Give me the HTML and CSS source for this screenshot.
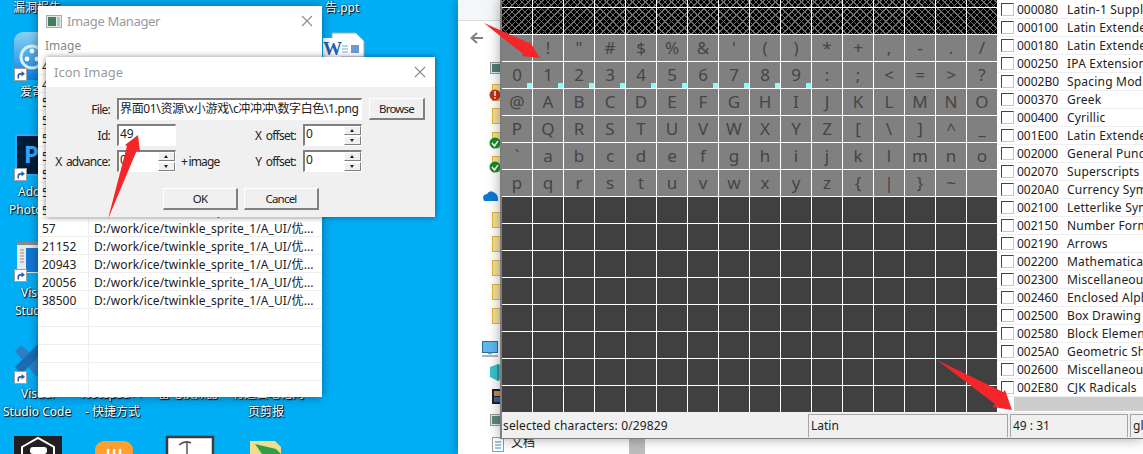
FILE: index.html
```html
<!DOCTYPE html>
<html lang="zh">
<head>
<meta charset="utf-8">
<title>Image Manager</title>
<link rel="stylesheet" href="styles.css">
</head>
<body>
<div class="desktop">
  <svg class="canvas-art" width="1143" height="454" viewBox="0 0 1143 454">
    <defs>
      <linearGradient id="iq" x1="0" y1="0" x2="0" y2="1"><stop offset="0" stop-color="#8ad2f5"/><stop offset="1" stop-color="#0a7fe0"/></linearGradient>
      <symbol id="sc" viewBox="0 0 13 13">
        <rect x=".5" y=".5" width="12" height="12" fill="#fff" stroke="#a0a0a0"/>
        <path d="M3.5 10.5V7.5Q3.5 5 6.5 5H7.5V3L11 5.8 7.5 8.5V6.8H6.5Q5 6.8 5 8.5V10.5Z" fill="#2f5ea8"/>
      </symbol>
    </defs>
    <rect x="14" y="32" width="40" height="48" rx="9" fill="url(#iq)"/>
    <circle cx="32" cy="57" r="11" fill="none" stroke="#d6effb" stroke-width="3"/>
    <circle cx="32" cy="51" r="2.4" fill="#fff"/><circle cx="27" cy="59" r="2.4" fill="#fff"/><circle cx="37" cy="59" r="2.4" fill="#fff"/>
    <use href="#sc" x="14" y="68" width="13" height="13"/>

    <rect x="16" y="135" width="30" height="40" fill="#001e36" stroke="#31a8ff" stroke-width="2"/>
    <text x="24" y="163" class="art-p">P</text>
    <use href="#sc" x="14" y="168" width="13" height="13"/>

    <rect x="17" y="242" width="30" height="31" fill="#e8e8e8"/>
    <rect x="17" y="242" width="30" height="3" fill="#8a8a8a"/>
    <rect x="26" y="248" width="20" height="24" fill="#1478d4"/>
    <path d="M20 250h4M20 253h4M20 256h4M20 259h4M20 262h4" stroke="#8f8f8f"/>
    <use href="#sc" x="14" y="269" width="13" height="13"/>

    <path d="M15 351L21 345 40 362V376H36Z" fill="#2a7fc6"/>
    <path d="M15 367L21 374 42 354V344H38Z" fill="#1b6db3"/>
    <use href="#sc" x="14" y="371" width="13" height="13"/>

    <path d="M332 33H356L364 41V57H332Z" fill="#fff" stroke="#9aa8b8"/>
    <rect x="323" y="38" width="18" height="19" fill="#fff"/>
    <text x="323" y="55" class="art-w">W</text>
    <path d="M342 46h6M342 49h6M342 52h6" stroke="#7fa6d6"/>
    <rect x="351" y="45" width="8" height="8" fill="#6f9ad0"/>

    <rect x="14" y="436" width="48" height="18" fill="#231f20"/>
    <path d="M22 454V447L38 438 54 447V454" fill="none" stroke="#fff" stroke-width="2"/>
    <rect x="30" y="447" width="17" height="7" rx="3" fill="#fff"/>
    <rect x="95" y="441" width="38" height="20" rx="9" fill="#ff9f2e"/>
    <path d="M108 449v5M114 449v5M120 449v5" stroke="#fff" stroke-width="2.5"/>
    <rect x="167" y="437" width="46" height="20" fill="#fff" stroke="#3c3c3c" stroke-width="2.5"/>
    <path d="M179 445Q185 440 191 443M187 442V454" fill="none" stroke="#555" stroke-width="1.5"/>
    <path d="M250 441H275L281 447V454H250Z" fill="#f1dd8a"/>
    <path d="M255 444L276 449 281 454H262Z" fill="#2f9e44"/>
  </svg>

  <span class="label lbl-a">漏洞报告</span>
  <span class="label lbl-b">告.ppt</span>
  <span class="label lbl-c">爱奇</span>
  <span class="label lbl-d">Ado</span>
  <span class="label lbl-e">Photo</span>
  <span class="label lbl-f">Vis</span>
  <span class="label lbl-g">Stud</span>
  <span class="label lbl-h">Visual</span>
  <span class="label lbl-i">Studio Code</span>
  <span class="label lbl-j">Notepad++</span>
  <span class="label lbl-k">- 快捷方式</span>
  <span class="label lbl-l">雷电模拟器</span>
  <span class="label lbl-m">有道云笔记网</span>
  <span class="label lbl-n">页剪报</span>

  <section class="explorer">
    <div class="explorer-top"></div>
    <svg class="strip" width="50" height="454" viewBox="458 0 50 454">
      <path d="M483 38H472M477 33L471.500 38 477 43" fill="none" stroke="#808080" stroke-width="2"/>
      <g class="st-folders">
        <rect x="492.500" y="84.500" width="10" height="16"/>
        <rect x="492.500" y="108.500" width="10" height="15"/>
        <rect x="492.500" y="132.500" width="10" height="15"/>
        <rect x="492.500" y="156.500" width="10" height="15"/>
        <rect x="492.500" y="212.500" width="10" height="15"/>
        <rect x="492.500" y="236.500" width="10" height="15"/>
        <rect x="492.500" y="260.500" width="10" height="15"/>
        <rect x="492.500" y="284.500" width="10" height="15"/>
        <rect x="492.500" y="308.500" width="10" height="15"/>
      </g>
      <rect x="490.500" y="62.500" width="12" height="11" fill="#dfe8ee" stroke="#9a9a9a"/>
      <rect x="492" y="64" width="10" height="8" fill="#4d7f7a"/>
      <circle cx="495" cy="95" r="5.500" fill="#c0341d"/>
      <rect x="494.300" y="91" width="1.500" height="5" fill="#fff"/><rect x="494.300" y="97" width="1.500" height="1.500" fill="#fff"/>
      <circle cx="495" cy="143" r="5.500" fill="#1e8a2a"/>
      <path d="M492 143L494.500 146 498 141" fill="none" stroke="#fff" stroke-width="1.500"/>
      <circle cx="495" cy="167" r="5.500" fill="#1e8a2a"/>
      <path d="M492 167L494.500 170 498 165" fill="none" stroke="#fff" stroke-width="1.500"/>
      <path d="M484 201Q481 195 487 194 490 189 495 193 498.500 195 498 201Z" fill="#0f78d4"/>
      <rect x="482.500" y="341.500" width="15" height="11" fill="#5cb8f2" stroke="#2a6f9e"/>
      <path d="M482 356H498M488 353.500H492" stroke="#8aa0ae" stroke-width="1.500"/>
      <path d="M490 367L498 364 502 366V378L498 381 490 377Z" fill="#3cc3cc"/>
      <path d="M498 364V381" stroke="#0f7f8c"/>
      <rect x="492" y="389" width="11" height="15" fill="#222"/>
      <rect x="494" y="391" width="7" height="5" fill="#c85"/><rect x="494" y="397" width="7" height="5" fill="#36a"/>
      <rect x="490.500" y="414.500" width="12" height="11" fill="#dfe8ee" stroke="#9a9a9a"/>
      <rect x="492" y="416" width="10" height="8" fill="#5d8a80"/>
      <rect x="492.500" y="437.500" width="11" height="14" fill="#fff" stroke="#9a9a9a"/>
      <path d="M495 442h6M495 445h6M495 448h6" stroke="#2a8fc6"/>
    </svg>
    <span class="doc-label">文档</span>
    <div class="explorer-scroll"></div>
  </section>

  <section class="font-app">
    <div class="font-main">
      <div class="glyph-area">
        <div class="band band-check"></div>
        <div class="glyph-grid">
          <i class="cell"></i><i class="cell">!</i><i class="cell">&quot;</i><i class="cell">#</i><i class="cell">$</i><i class="cell">%</i><i class="cell">&amp;</i><i class="cell">'</i><i class="cell">(</i><i class="cell">)</i><i class="cell">*</i><i class="cell">+</i><i class="cell">,</i><i class="cell">-</i><i class="cell">.</i><i class="cell">/</i>
          <i class="cell mark">0</i><i class="cell mark">1</i><i class="cell mark">2</i><i class="cell mark">3</i><i class="cell mark">4</i><i class="cell mark">5</i><i class="cell mark">6</i><i class="cell mark">7</i><i class="cell mark">8</i><i class="cell mark">9</i><i class="cell">:</i><i class="cell">;</i><i class="cell">&lt;</i><i class="cell">=</i><i class="cell">&gt;</i><i class="cell">?</i>
          <i class="cell">@</i><i class="cell">A</i><i class="cell">B</i><i class="cell">C</i><i class="cell">D</i><i class="cell">E</i><i class="cell">F</i><i class="cell">G</i><i class="cell">H</i><i class="cell">I</i><i class="cell">J</i><i class="cell">K</i><i class="cell">L</i><i class="cell">M</i><i class="cell">N</i><i class="cell">O</i>
          <i class="cell">P</i><i class="cell">Q</i><i class="cell">R</i><i class="cell">S</i><i class="cell">T</i><i class="cell">U</i><i class="cell">V</i><i class="cell">W</i><i class="cell">X</i><i class="cell">Y</i><i class="cell">Z</i><i class="cell">[</i><i class="cell">\</i><i class="cell">]</i><i class="cell">^</i><i class="cell">_</i>
          <i class="cell">`</i><i class="cell">a</i><i class="cell">b</i><i class="cell">c</i><i class="cell">d</i><i class="cell">e</i><i class="cell">f</i><i class="cell">g</i><i class="cell">h</i><i class="cell">i</i><i class="cell">j</i><i class="cell">k</i><i class="cell">l</i><i class="cell">m</i><i class="cell">n</i><i class="cell">o</i>
          <i class="cell">p</i><i class="cell">q</i><i class="cell">r</i><i class="cell">s</i><i class="cell">t</i><i class="cell">u</i><i class="cell">v</i><i class="cell">w</i><i class="cell">x</i><i class="cell">y</i><i class="cell">z</i><i class="cell">{</i><i class="cell">|</i><i class="cell">}</i><i class="cell">~</i><i class="cell"></i>
        </div>
        <div class="band band-dark"></div>
      </div>
      <div class="range-col">
        <ul class="range-list">
          <li><b></b><span>000080</span><em>Latin-1 Supplement</em></li>
          <li><b></b><span>000100</span><em>Latin Extended-A</em></li>
          <li><b></b><span>000180</span><em>Latin Extended-B</em></li>
          <li><b></b><span>000250</span><em>IPA Extensions</em></li>
          <li><b></b><span>0002B0</span><em>Spacing Modifier</em></li>
          <li><b></b><span>000370</span><em>Greek</em></li>
          <li><b></b><span>000400</span><em>Cyrillic</em></li>
          <li><b></b><span>001E00</span><em>Latin Extended</em></li>
          <li><b></b><span>002000</span><em>General Punctuation</em></li>
          <li><b></b><span>002070</span><em>Superscripts</em></li>
          <li><b></b><span>0020A0</span><em>Currency Symbols</em></li>
          <li><b></b><span>002100</span><em>Letterlike Symbols</em></li>
          <li><b></b><span>002150</span><em>Number Forms</em></li>
          <li><b></b><span>002190</span><em>Arrows</em></li>
          <li><b></b><span>002200</span><em>Mathematical</em></li>
          <li><b></b><span>002300</span><em>Miscellaneous</em></li>
          <li><b></b><span>002460</span><em>Enclosed Alpha</em></li>
          <li><b></b><span>002500</span><em>Box Drawing</em></li>
          <li><b></b><span>002580</span><em>Block Elements</em></li>
          <li><b></b><span>0025A0</span><em>Geometric Shapes</em></li>
          <li><b></b><span>002600</span><em>Miscellaneous</em></li>
          <li><b></b><span>002E80</span><em>CJK Radicals</em></li>
        </ul>
        <div class="range-scroll"></div>
      </div>
    </div>
    <footer class="status">
      <span class="panel p-sel">selected characters: 0/29829</span>
      <span class="panel p-name">Latin</span>
      <span class="panel p-code">49 : 31</span>
      <span class="panel p-glyph">glyphs</span>
    </footer>
  </section>

  <section class="win manager">
    <header class="win-title">
      <svg class="win-icon" width="16" height="13" viewBox="0 0 16 13"><rect x=".5" y=".5" width="15" height="12" fill="#e4e8e6" stroke="#a8a8a8"/><rect x="2" y="2" width="8" height="9" fill="#3f7f5f"/><rect x="11" y="2" width="3" height="9" fill="#b9c6c0"/></svg>
      <span class="win-name">Image Manager</span>
      <svg class="win-close" width="12" height="12" viewBox="0 0 12 12"><path d="M1 1L11 11M11 1L1 11" stroke="#8c8c8c" stroke-width="1.100"/></svg>
    </header>
    <div class="menu">Image</div>
    <div class="table">
      <div class="row"><span>48</span><span>D:/work/ice/twinkle_sprite_1/A_UI/优...</span></div>
      <div class="row"><span>49</span><span>D:/work/ice/twinkle_sprite_1/A_UI/优...</span></div>
      <div class="row"><span>50</span><span>D:/work/ice/twinkle_sprite_1/A_UI/优...</span></div>
      <div class="row"><span>51</span><span>D:/work/ice/twinkle_sprite_1/A_UI/优...</span></div>
      <div class="row"><span>52</span><span>D:/work/ice/twinkle_sprite_1/A_UI/优...</span></div>
      <div class="row"><span>53</span><span>D:/work/ice/twinkle_sprite_1/A_UI/优...</span></div>
      <div class="row"><span>54</span><span>D:/work/ice/twinkle_sprite_1/A_UI/优...</span></div>
      <div class="row"><span>55</span><span>D:/work/ice/twinkle_sprite_1/A_UI/优...</span></div>
      <div class="row"><span>56</span><span>D:/work/ice/twinkle_sprite_1/A_UI/优...</span></div>
      <div class="row"><span>57</span><span>D:/work/ice/twinkle_sprite_1/A_UI/优...</span></div>
      <div class="row"><span>21152</span><span>D:/work/ice/twinkle_sprite_1/A_UI/优...</span></div>
      <div class="row"><span>20943</span><span>D:/work/ice/twinkle_sprite_1/A_UI/优...</span></div>
      <div class="row"><span>20056</span><span>D:/work/ice/twinkle_sprite_1/A_UI/优...</span></div>
      <div class="row"><span>38500</span><span>D:/work/ice/twinkle_sprite_1/A_UI/优...</span></div>
      <div class="row"><span></span><span></span></div>
      <div class="row"><span></span><span></span></div>
      <div class="row"><span></span><span></span></div>
      <div class="row"><span></span><span></span></div>
      <div class="row"><span></span><span></span></div>
    </div>
  </section>

  <section class="win dialog">
    <header class="win-title dlg-title">
      <span>Icon Image</span>
      <svg class="win-close" width="12" height="12" viewBox="0 0 12 12"><path d="M1 1L11 11M11 1L1 11" stroke="#8c8c8c" stroke-width="1.100"/></svg>
    </header>
    <div class="dlg-body">
      <div class="form">
        <label class="lab">File:</label>
        <div class="field file-field"><span>界面01\资源\x小游戏\c冲冲冲\数字白色\1.png</span></div>
        <button class="btn">Browse</button>

        <label class="lab">Id:</label>
        <div class="field">49</div>
        <label class="lab">X offset:</label>
        <div class="field spin">0
          <div class="spin-btns"><i class="up"></i><i class="down"></i></div>
        </div>
        <i class="gap"></i>

        <label class="lab">X advance:</label>
        <div class="field spin">0
          <div class="spin-btns"><i class="up"></i><i class="down"></i></div>
        </div>
        <div class="mid"><span class="plus">+ image</span><label class="lab">Y offset:</label></div>
        <div class="field spin">0
          <div class="spin-btns"><i class="up"></i><i class="down"></i></div>
        </div>
      </div>
      <div class="actions">
        <button class="btn wide">OK</button>
        <button class="btn wide">Cancel</button>
      </div>
    </div>
  </section>

  <svg class="arrows" width="1143" height="454" viewBox="0 0 1143 454">
    <polygon points="108,219 127,146 125,145 138,135 140,152 137,150"/>
    <polygon points="484,23 529,43 530,42 540,58 522,56 523,54"/>
    <polygon points="937,360 1003,392 1005,390 1012,410 993,407 995,404"/>
  </svg>
</div>
</body>
</html>
```
FILE: styles.css
```css
* { box-sizing: border-box; }
html, body { margin: 0; padding: 0; }
body {
  width: 1143px;
  height: 454px;
  overflow: hidden;
  font-family: "Noto Sans", "Noto Sans CJK SC", sans-serif;
  font-size: 12px;
  color: #222;
}
.desktop {
  position: relative;
  width: 1143px;
  height: 454px;
  overflow: hidden;
  background: #00aef6;
}
.canvas-art { position: absolute; left: 0; top: 0; }
.art-p { font: bold 24px "Noto Sans", sans-serif; fill: #31a8ff; }
.art-w { font: bold 19px "Liberation Serif", serif; fill: #1f5fb4; }

.label {
  position: absolute;
  color: #fff;
  line-height: 18px;
  white-space: nowrap;
  text-shadow: 1px 1px 1px #000, 0 0 2px rgba(0,0,0,.7);
}
.lbl-a { left: 13px; top: -1px; }
.lbl-b { left: 325px; top: -1px; }
.lbl-c { left: 20px; top: 83px; }
.lbl-d { left: 18px; top: 183px; }
.lbl-e { left: 9px; top: 201px; }
.lbl-f { left: 21px; top: 284px; }
.lbl-g { left: 15px; top: 302px; }
.lbl-h { left: 21px; top: 385px; }
.lbl-i { left: 3px; top: 403px; }
.lbl-j { left: 81px; top: 385px; }
.lbl-k { left: 85px; top: 403px; }
.lbl-l { left: 158px; top: 385px; }
.lbl-m { left: 232px; top: 385px; }
.lbl-n { left: 248px; top: 403px; }

/* explorer behind the font tool */
.explorer {
  position: absolute;
  left: 458px;
  top: 0;
  width: 685px;
  height: 454px;
  background: #fff;
  box-shadow: -2px 0 8px rgba(0,0,0,.25);
}
.explorer-top {
  height: 21px;
  background: #f5f6f7;
  border-bottom: 1px solid #dcdcdc;
}
.strip { position: absolute; left: 0; top: 0; }
.st-folders rect { fill: #f6e19a; stroke: #e2b93c; }
.doc-label { position: absolute; left: 53px; top: 434px; font-size: 12px; line-height: 18px; color: #222; }
.explorer-scroll { position: absolute; left: 171px; top: 436px; width: 16px; height: 18px; background: #bdbdbd; }

/* font tool */
.font-app {
  position: absolute;
  left: 500px;
  top: 0;
  width: 643px;
  height: 439px;
  display: flex;
  flex-direction: column;
  background: #f0f0f0;
  border-left: 2px solid #7d7d7d;
  border-bottom: 1px solid #7d7d7d;
  box-shadow: 0 0 12px rgba(0,0,0,.35);
}
.font-main { display: flex; height: 412px; }
.glyph-area { width: 495px; height: 412px; overflow: hidden; background: #404040; }
.band {
  background-size: 31px 27px;
  background-image:
    linear-gradient(to right, transparent 30px, #fff 30px),
    linear-gradient(to bottom, transparent 26px, #fff 26px);
}
.band-check {
  margin-top: -19px;
  height: 54px;
  background-color: #000;
  background-image:
    linear-gradient(to right, transparent 30px, #fff 30px),
    linear-gradient(to bottom, transparent 26px, #fff 26px),
    repeating-linear-gradient(45deg, #6e6e6e 0 1px, transparent 1px 4.600px),
    repeating-linear-gradient(-45deg, #6e6e6e 0 1px, transparent 1px 4.600px);
  background-size: 31px 27px, 31px 27px, auto, auto;
}
.band-dark { height: 216px; background-color: #404040; }
.glyph-grid {
  display: grid;
  grid-template-columns: repeat(16, 31px);
  grid-auto-rows: 27px;
}
.cell {
  position: relative;
  display: block;
  height: 27px;
  background: #808080;
  border-right: 1px solid #fff;
  border-bottom: 1px solid #fff;
  color: #454545;
  font-style: normal;
  font-size: 17px;
  line-height: 25px;
  text-align: center;
}
.mark::after {
  content: "";
  position: absolute;
  right: 0;
  bottom: 0;
  width: 5px;
  height: 5px;
  background: #7fffff;
}
.range-col { width: 146px; height: 412px; background: #fff; overflow: hidden; }
.range-list { list-style: none; margin: 0; padding: 1px 0 0; height: 397px; overflow: hidden; }
.range-list li {
  display: flex;
  align-items: center;
  height: 18px;
  border-bottom: 1px solid #efefef;
  padding-left: 4px;
  white-space: nowrap;
  overflow: hidden;
}
.range-list b {
  flex: none;
  width: 13px;
  height: 13px;
  background: #fff;
  border: 1px solid #c8c8c8;
  border-top-color: #444;
  border-left-color: #444;
}
.range-list span { flex: none; width: 50px; margin-left: 3px; }
.range-list em { font-style: normal; letter-spacing: .2px; }
.range-scroll { height: 14px; margin-left: 17px; background: #cdcdcd; }

.status { display: flex; height: 26px; padding-top: 2px; background: #f0f0f0; }
.panel {
  height: 23px;
  line-height: 21px;
  padding-left: 2px;
  border-left: 1px solid #a5a5a5;
  border-top: 1px solid #a5a5a5;
  border-right: 1px solid #a5a5a5;
  white-space: nowrap;
  overflow: hidden;
}
.p-sel { width: 306px; border: 0; padding-left: 1px; line-height: 23px; letter-spacing: .15px; }
.p-name { width: 200px; border-right: 1px solid #a5a5a5; }
.p-code { width: 118px; margin-left: 2px; }
.p-glyph { flex: 1; margin-left: 2px; border-right: 0; }

/* floating windows */
.win { position: absolute; background: #fff; }
.manager {
  left: 38px;
  top: 6px;
  width: 284px;
  height: 391px;
  display: flex;
  flex-direction: column;
  box-shadow: 0 0 10px rgba(0,0,0,.4);
}
.win-title {
  display: flex;
  align-items: center;
  height: 30px;
  flex: none;
  color: #9a9a9a;
  font-size: 13px;
  background: #fff;
}
.manager .win-title { padding: 0 9px 0 8px; }
.win-icon { margin-right: 5px; }
.win-name { letter-spacing: -.35px; }
.win-close { margin-left: auto; }
.menu { height: 21px; flex: none; padding-left: 7px; line-height: 20px; color: #888; font-size: 12px; }
.table { flex: 1; overflow: hidden; }
.row {
  display: grid;
  grid-template-columns: 51px 1fr;
  height: 18px;
  line-height: 19px;
  border-bottom: 1px solid #eeeeee;
  white-space: nowrap;
}
.row span:first-child { padding-left: 4px; border-right: 1px solid #eeeeee; }
.row span:last-child { padding-left: 5px; overflow: hidden; letter-spacing: .1px; }

.dialog {
  left: 46px;
  top: 57px;
  width: 389px;
  height: 160px;
  background: #f0f0f0;
  box-shadow: 0 0 6px rgba(0,0,0,.45);
}
.dlg-title { padding: 0 9px 0 8px; }
.dlg-body { padding-top: 11px; }
.form {
  display: grid;
  grid-template-columns: 64px 59px 113px 59px 56px;
  grid-auto-rows: 22px;
  column-gap: 7px;
  row-gap: 4px;
}
.lab { text-align: right; line-height: 24px; white-space: nowrap; letter-spacing: -.75px; word-spacing: 2px; }
.field {
  position: relative;
  background: #fff;
  border: 2px solid #808080;
  border-right: 1px solid #fff;
  border-bottom: 1px solid #fff;
  padding-left: 1px;
  line-height: 15px;
  overflow: hidden;
  white-space: nowrap;
}
.file-field { grid-column: span 3; line-height: 18px; letter-spacing: -.35px; }
.file-field span { display: block; width: 100%; }
.spin-btns {
  position: absolute;
  right: 0;
  top: 0;
  width: 17px;
  height: 100%;
  display: flex;
  flex-direction: column;
  gap: 1px;
}
.spin-btns i {
  position: relative;
  flex: 1;
  display: block;
  background: #f0f0f0;
  border-top: 1px solid #fff;
  border-left: 1px solid #fff;
  border-right: 1px solid #808080;
  border-bottom: 1px solid #808080;
}
.spin-btns i::after {
  content: "";
  position: absolute;
  left: 5px;
  top: 2px;
  border-left: 2px solid transparent;
  border-right: 2px solid transparent;
}
.spin-btns .up::after { border-bottom: 3px solid #222; }
.spin-btns .down::after { border-top: 3px solid #222; }
.mid { display: flex; justify-content: space-between; margin-left: -2px; white-space: nowrap; }
.plus { line-height: 24px; letter-spacing: -.8px; word-spacing: -1px; }
.btn {
  font: inherit;
  font-size: 11.500px;
  letter-spacing: -.8px;
  color: #222;
  padding: 0;
  background: #f0f0f0;
  border: 1px solid #fff;
  border-right: 2px solid #808080;
  border-bottom: 2px solid #808080;
  height: 22px;
}
.actions { display: flex; gap: 6px; margin: 16px 0 0 117px; }
.wide { width: 75px; }

.arrows { position: absolute; left: 0; top: 0; pointer-events: none; }
.arrows polygon { fill: #f5262a; }
```
